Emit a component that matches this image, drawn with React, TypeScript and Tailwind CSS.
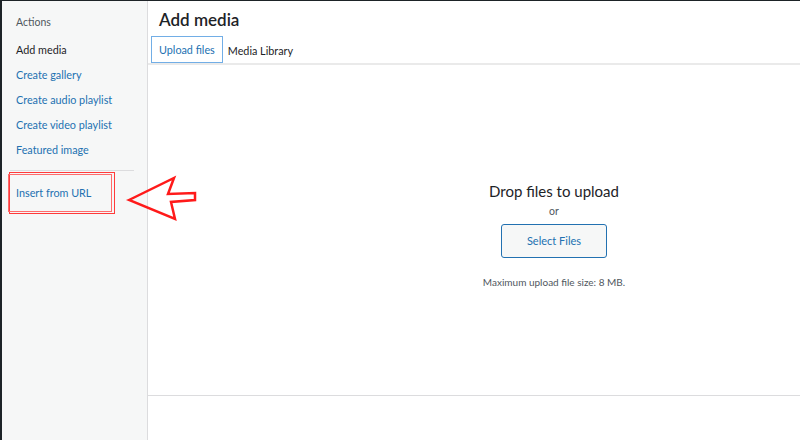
import React from "react";

const MENU = [
  { label: "Add media", active: true },
  { label: "Create gallery" },
  { label: "Create audio playlist" },
  { label: "Create video playlist" },
  { label: "Featured image" },
];

function Arrow() {
  return (
    <svg
      className="absolute left-[120px] top-[170px]"
      width="80"
      height="56"
      viewBox="120 170 80 56"
      fill="none"
    >
      <path
        d="M127 199 L172 177 L166 193 L193 192 L193 199 L169 201 L173 218 Z"
        stroke="#ff1a1a"
        strokeWidth="2.5"
        strokeLinejoin="miter"
      />
    </svg>
  );
}

export default function App() {
  return (
    <div
      className="relative flex h-[440px] w-[800px] overflow-hidden border-t border-l-2 border-[#1d2327] bg-white text-[#1d2327]"
      style={{ fontFamily: 'Lato, "Noto Sans", sans-serif' }}
    >
      {/* Sidebar */}
      <div className="w-[146px] shrink-0 border-r border-[#dcdcde] bg-[#f6f7f7] pt-[13px]">
        <p className="pl-[14px] text-[10.5px] leading-4 text-[#50575e]">Actions</p>
        <ul className="mt-[7px]">
          {MENU.map((item) => (
            <li
              key={item.label}
              className={`pl-[14px] text-[10.8px] leading-[25px] ${
                item.active ? "text-[#1d2327]" : "text-[#2271b1]"
              }`}
            >
              {item.label}
            </li>
          ))}
        </ul>
        <div className="mx-[8px] mt-[8px] w-[124px] border-t border-[#dcdcde]" />
        <div className="relative ml-[7px] mt-[1px] w-[106px]">
          <div className="absolute inset-0 border border-[#ff3b3b]" />
          <div className="absolute -left-[1px] top-[2px] bottom-[2px] right-[3px] border border-[#ff6b6b]" />
          <p className="py-[9px] pl-[7px] text-[10.8px] leading-[24px] text-[#2271b1]">Insert from URL</p>
        </div>
      </div>

      {/* Main */}
      <div className="flex min-w-0 flex-1 flex-col">
        <h1 className="pl-[11px] pt-[7px] text-[17px] font-semibold leading-6">Add media</h1>
        <div className="flex items-end border-b-2 border-[#eaeaea] pl-[3px] pt-[4px]">
          <div className="border border-[#72aee6] px-[7px] text-[10.8px] leading-[25px] text-[#2271b1]">
            Upload files
          </div>
          <div className="px-[5px] text-[10.8px] leading-[25px]">Media Library</div>
        </div>

        <div className="flex w-[812px] flex-1 flex-col items-center pt-[114px]">
          <p className="text-[15px] leading-6 text-[#1d2327]">Drop files to upload</p>
          <p className="text-[10.5px] leading-4 text-[#50575e]">or</p>
          <button className="mt-[5px] h-[34px] w-[106px] rounded-[3px] border border-[#2271b1] bg-[#f6f7f7] text-[11px] text-[#2271b1]">
            Select Files
          </button>
          <p className="mt-[17px] text-[10px] text-[#50575e]">Maximum upload file size: 8 MB.</p>
        </div>

        <div className="h-[45px] border-t border-[#dcdcde]" />
      </div>

      <Arrow />
    </div>
  );
}
